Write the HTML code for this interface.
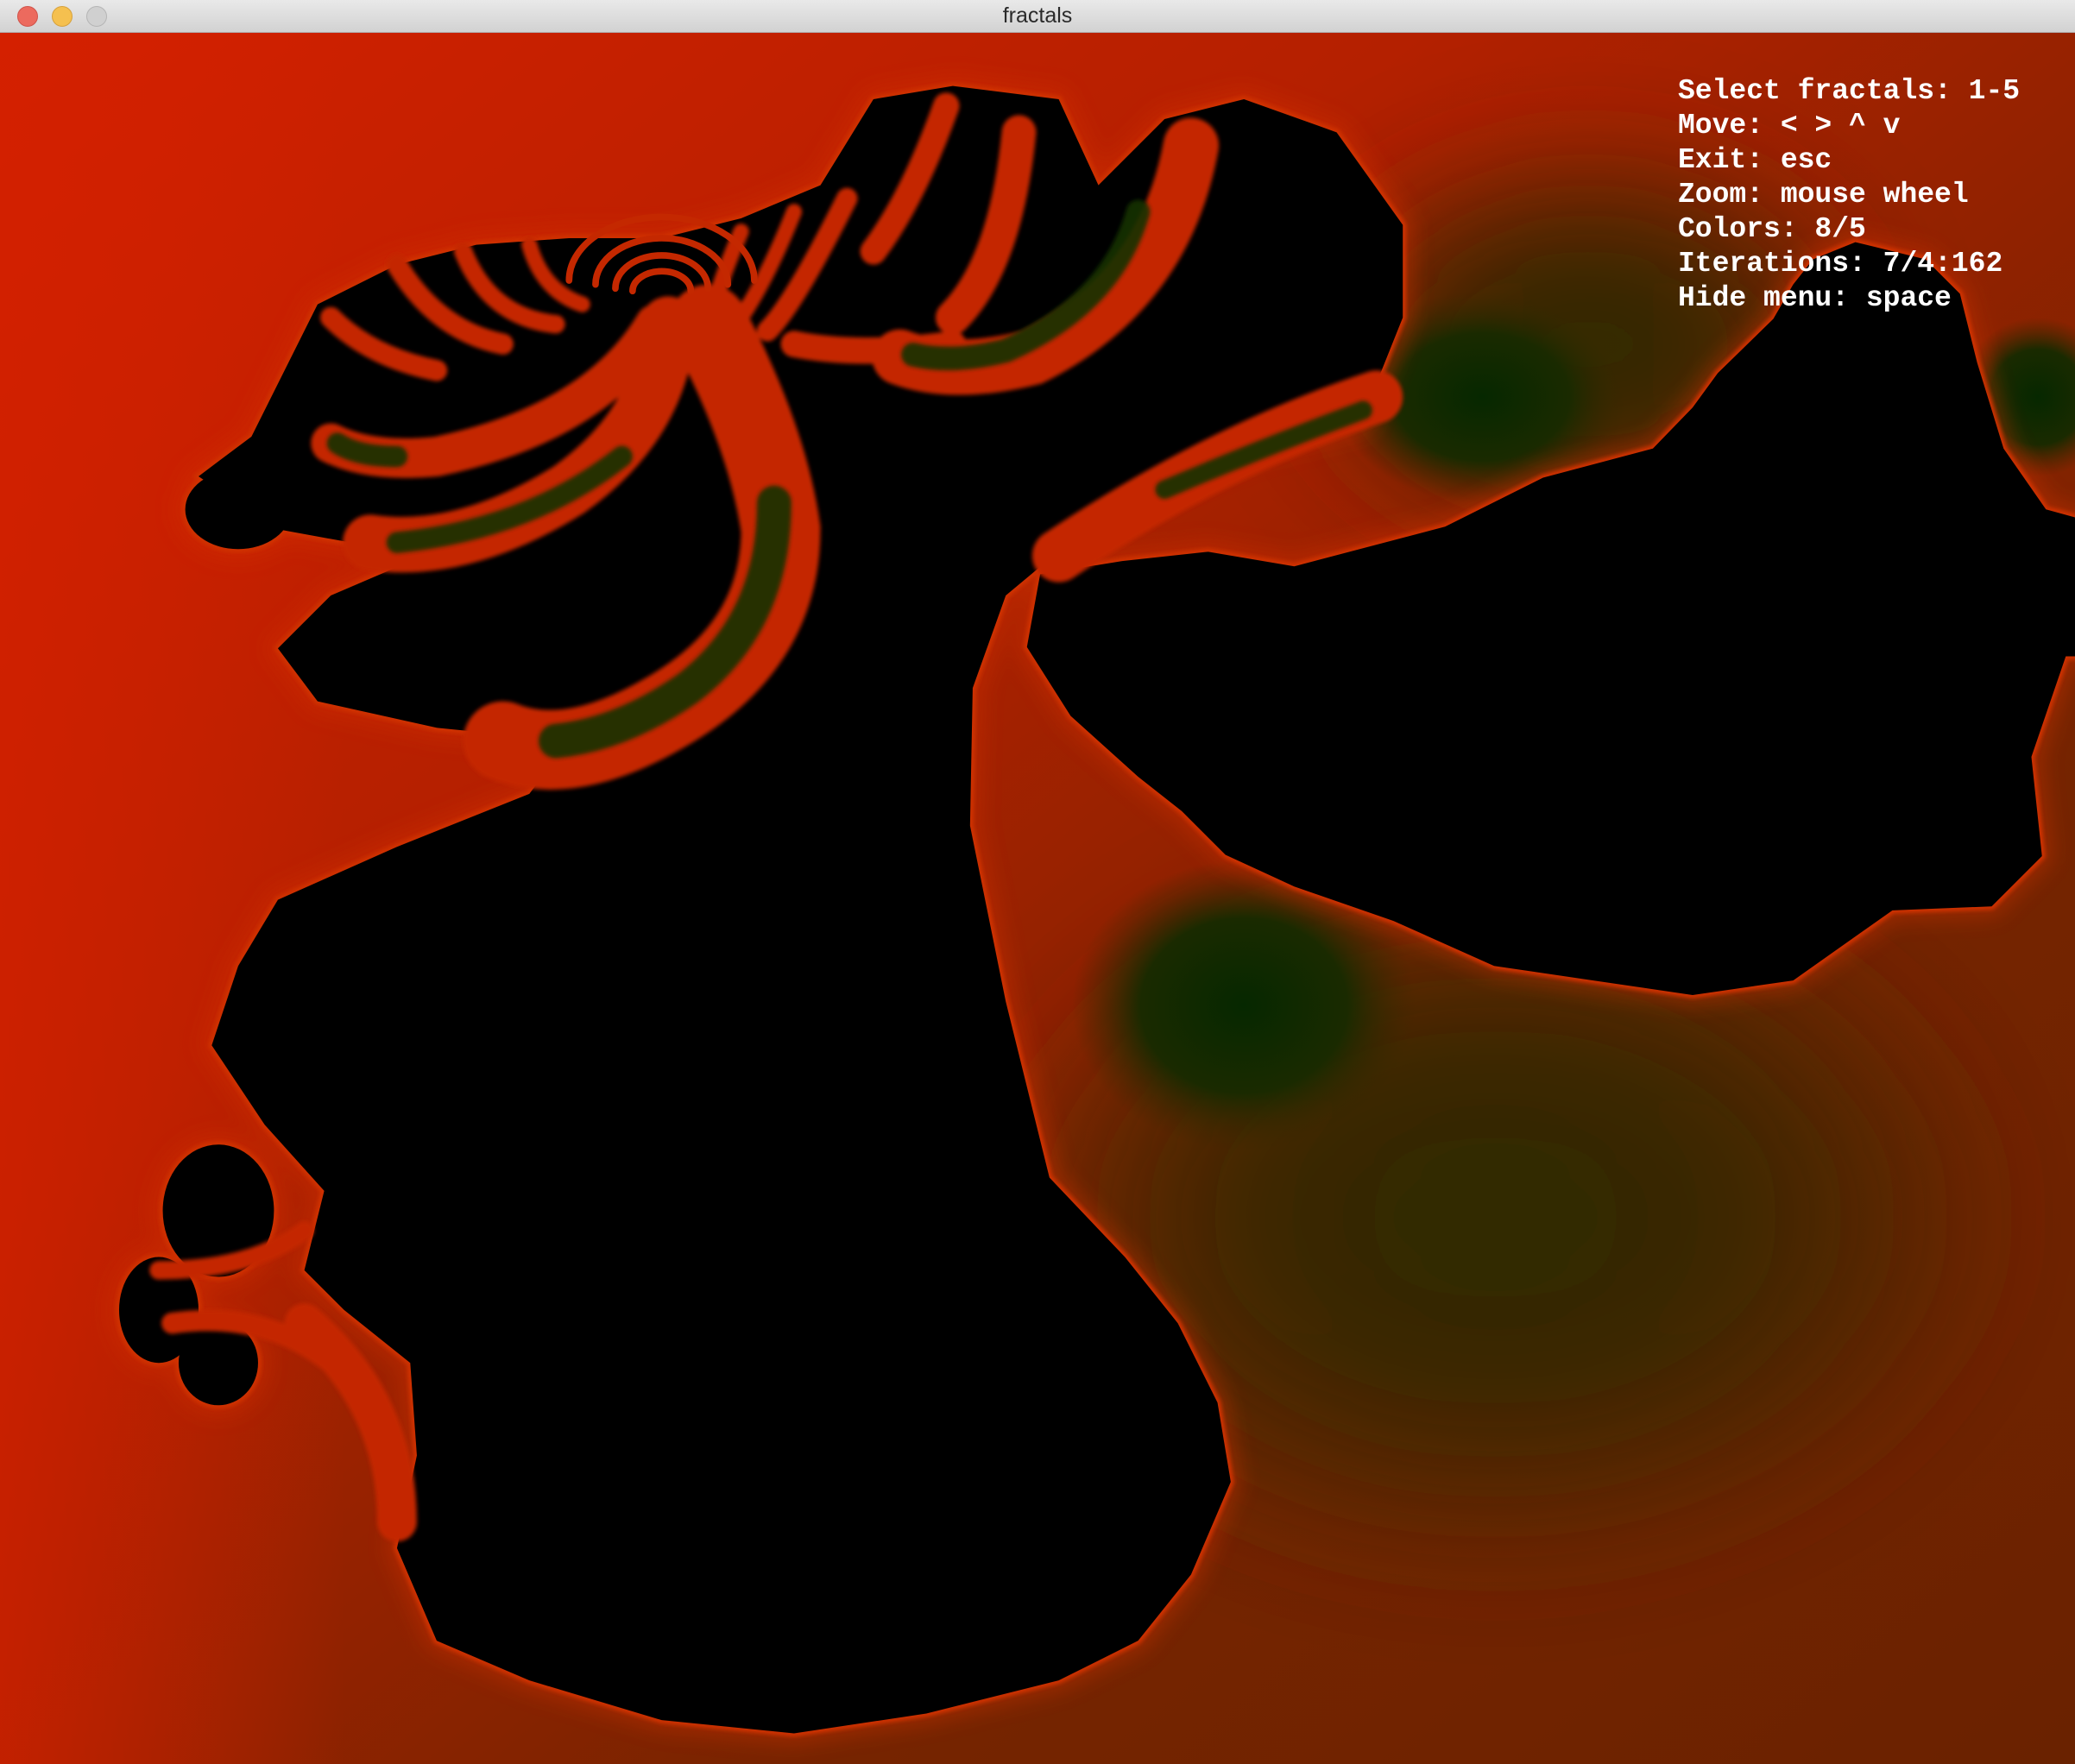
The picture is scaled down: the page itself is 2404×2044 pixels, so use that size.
<!DOCTYPE html>
<html><head><meta charset="utf-8"><style>
html,body{margin:0;padding:0;width:2404px;height:2044px;overflow:hidden;background:#ccc}
#bar{position:absolute;left:0;top:0;width:2404px;height:38px;background:linear-gradient(#e9e9e9,#d2d2d2);border-bottom:1px solid #b2b2b2;box-sizing:border-box}
.dot{position:absolute;top:7px;width:24px;height:24px;border-radius:50%;box-sizing:border-box}
#title{position:absolute;top:0;left:0;width:2404px;text-align:center;font:25px/36px "Liberation Sans",sans-serif;color:#2a2a2a}
svg{position:absolute;left:0;top:0}
#menu{position:absolute;left:1944px;top:86px;font:bold 33px/40px "Liberation Mono",monospace;color:#fff;white-space:pre}
</style></head><body>
<svg width="2404" height="2044" viewBox="0 0 2404 2044">
<defs>
<linearGradient id="bg" x1="0" y1="0" x2="1" y2="1">
<stop offset="0" stop-color="#d42000"/><stop offset="0.35" stop-color="#b42000"/><stop offset="0.7" stop-color="#762400"/><stop offset="1" stop-color="#6a2200"/></linearGradient>
<linearGradient id="lf" x1="0" y1="0" x2="1" y2="0">
<stop offset="0" stop-color="#d42000" stop-opacity="0.7"/><stop offset="1" stop-color="#d42000" stop-opacity="0"/></linearGradient>
<radialGradient id="ol" cx="0.5" cy="0.5" r="0.5"><stop offset="0" stop-color="#2a2a00"/><stop offset="0.5" stop-color="#3e2700"/><stop offset="1" stop-color="#3e2700" stop-opacity="0"/></radialGradient>
<radialGradient id="gr" cx="0.5" cy="0.5" r="0.5"><stop offset="0" stop-color="#062800"/><stop offset="0.6" stop-color="#1a2a00"/><stop offset="1" stop-color="#3a2800" stop-opacity="0"/></radialGradient>
<filter id="b1"><feGaussianBlur stdDeviation="8"/></filter>
<filter id="b2"><feGaussianBlur stdDeviation="1.5"/></filter>
<filter id="b3" x="-50%" y="-50%" width="200%" height="200%"><feGaussianBlur stdDeviation="40"/></filter>
</defs>
<rect width="2404" height="2044" fill="url(#bg)"/>
<rect x="0" y="0" width="400" height="2044" fill="url(#lf)"/>
<g transform="scale(1.5332)">
<ellipse cx="1130" cy="920" rx="400" ry="280" fill="url(#ol)" filter="url(#b3)"/>
<ellipse cx="1200" cy="260" rx="230" ry="160" fill="url(#ol)" filter="url(#b3)"/>
<ellipse cx="940" cy="760" rx="130" ry="110" fill="url(#gr)"/>
<ellipse cx="1120" cy="300" rx="110" ry="80" fill="url(#gr)"/>
<ellipse cx="1540" cy="300" rx="60" ry="60" fill="url(#gr)"/>
<g id="shapes">
<path id="c" d="M240,230 L300,200 360,185 430,180 500,180 560,165 620,140 660,75 720,65 800,75 830,140 880,90 940,75 1010,100 1060,170 1060,240 1040,290 1030,320 950,340 850,380 790,425 760,450 735,520 733,624 760,757 793,890 850,950 890,1000 920,1060 930,1120 900,1190 860,1240 800,1270 700,1295 600,1310 500,1300 400,1270 330,1240 300,1170 315,1100 310,1030 260,990 230,960 245,900 200,850 160,790 180,730 210,680 300,640 400,600 430,560 330,550 240,530 210,490 250,450 320,420 210,400 150,360 190,330 Z"/>
<path id="r" d="M786,434 L848,424 913,417 978,428 1092,398 1166,361 1249,339 1279,308 1298,282 1340,241 1355,215 1370,196 1402,183 1455,196 1481,222 1494,274 1514,339 1546,385 1568,391 1568,496 1561,496 1535,572 1543,647 1505,685 1430,688 1355,741 1279,752 1204,741 1129,730 1053,696 978,670 926,646 893,613 860,587 809,541 776,489 Z"/>
<ellipse cx="165" cy="915" rx="42" ry="50"/>
<ellipse cx="165" cy="1030" rx="30" ry="32"/>
<ellipse cx="180" cy="385" rx="40" ry="30"/>
<ellipse cx="120" cy="990" rx="30" ry="40"/>
</g>
<use href="#shapes" fill="none" stroke="#d43000" stroke-width="14" opacity="0.45" filter="url(#b1)"/>
<use href="#shapes" fill="#000" stroke="#d03000" stroke-width="5" filter="url(#b2)"/>
<use href="#shapes" fill="#000"/>
<g fill="none" stroke-linecap="round">
<g stroke="#c42800" filter="url(#b2)">
<path d="M495,245 Q450,320 330,345 Q280,350 250,335" stroke-width="30"/>
<path d="M505,245 Q500,320 430,370 Q350,420 280,410" stroke-width="42"/>
<path d="M535,245 Q580,330 590,400 Q590,490 500,540 Q430,580 380,560" stroke-width="60"/>
<path d="M900,110 Q880,220 780,270 Q720,285 680,270" stroke-width="42"/>
<path d="M770,100 Q760,200 720,240" stroke-width="26"/>
<path d="M715,80 Q690,150 660,190" stroke-width="20"/>
<path d="M640,150 Q600,230 580,250" stroke-width="16"/>
<path d="M600,260 Q650,270 720,260" stroke-width="20"/>
<path d="M250,240 Q280,270 330,280" stroke-width="16"/>
<path d="M300,200 Q330,250 380,260" stroke-width="16"/>
<path d="M350,190 Q370,240 420,245" stroke-width="14"/>
<path d="M400,185 Q410,220 440,230" stroke-width="12"/>
<path d="M560,175 Q545,210 540,230" stroke-width="12"/>
<path d="M600,160 Q580,210 560,240" stroke-width="12"/>
<path d="M1040,300 Q920,340 800,420" stroke-width="40"/>
<path d="M120,960 Q190,960 230,930" stroke-width="14"/>
<path d="M130,1000 Q200,990 250,1030" stroke-width="16"/>
<path d="M230,1000 Q300,1060 300,1150" stroke-width="30"/>
</g>
<g stroke="#123000" filter="url(#b2)" opacity="0.9">
<path d="M300,345 Q270,345 255,335" stroke-width="16"/>
<path d="M470,345 Q400,400 300,410" stroke-width="16"/>
<path d="M585,380 Q585,470 520,520 Q470,555 420,560" stroke-width="26"/>
<path d="M860,160 Q840,230 760,265 Q720,275 690,268" stroke-width="18"/>
<path d="M1030,310 Q950,340 880,370" stroke-width="14"/>
</g>
<g stroke="#c42800" stroke-width="5">
<path d="M450,215 A50,35 0 0 1 550,215"/>
<path d="M465,218 A35,25 0 0 1 535,218"/>
<path d="M478,220 A22,15 0 0 1 522,220"/>
<path d="M430,212 A70,48 0 0 1 570,212"/>
</g>
</g>
</g>
</svg>
<div id="bar">
<div class="dot" style="left:20px;background:#ec6a5e;border:1px solid #d0534a"></div>
<div class="dot" style="left:60px;background:#f5c04f;border:1px solid #d6a13c"></div>
<div class="dot" style="left:100px;background:#d0d0d0;border:1px solid #b5b5b5"></div>
<div id="title">fractals</div>
</div>
<div id="menu">Select fractals: 1-5
Move: &lt; &gt; ^ v
Exit: esc
Zoom: mouse wheel
Colors: 8/5
Iterations: 7/4:162
Hide menu: space</div>
</body></html>
